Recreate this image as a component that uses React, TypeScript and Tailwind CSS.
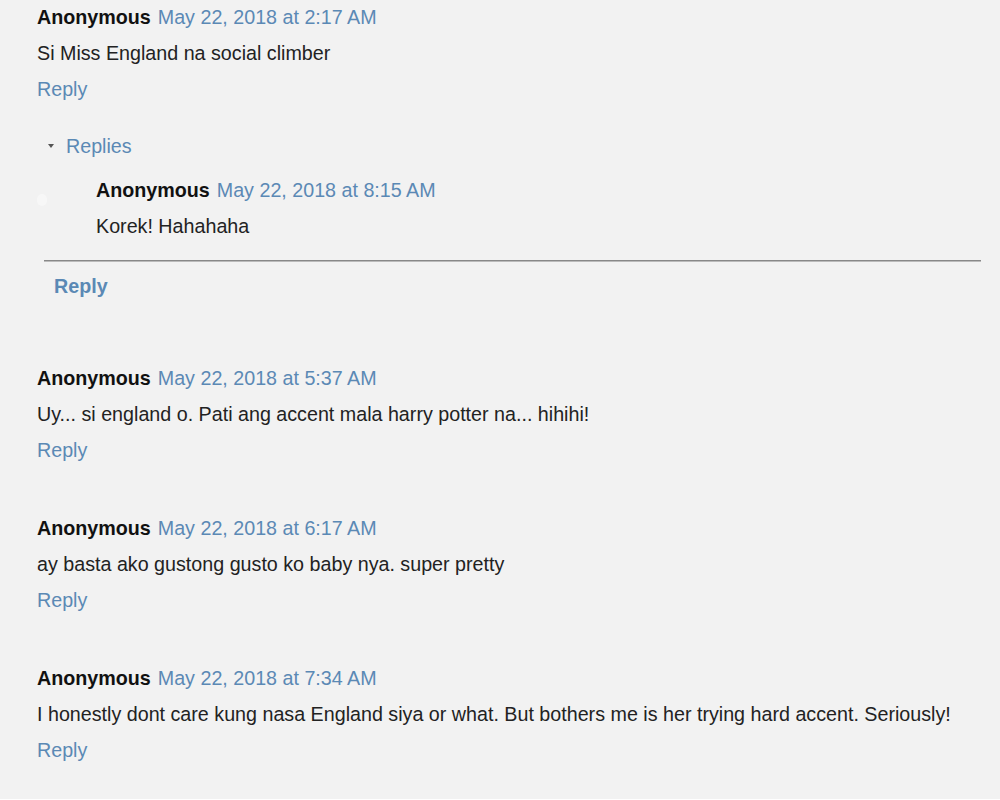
const LINK = 'text-[#5b89b5]';

interface CommentData {
  time: string;
  body: string;
}

const comments: CommentData[] = [
  { time: 'May 22, 2018 at 5:37 AM', body: 'Uy... si england o. Pati ang accent mala harry potter na... hihihi!' },
  { time: 'May 22, 2018 at 6:17 AM', body: 'ay basta ako gustong gusto ko baby nya. super pretty' },
  { time: 'May 22, 2018 at 7:34 AM', body: 'I honestly dont care kung nasa England siya or what. But bothers me is her trying hard accent. Seriously!' },
];

const Byline = ({ time }: { time: string }) => (
  <div className="flex gap-[7px]">
    <span className="font-bold text-[#111]">Anonymous</span>
    <a className={LINK}>{time}</a>
  </div>
);

const Comment = ({ time, body }: CommentData) => (
  <div>
    <Byline time={time} />
    <p>{body}</p>
    <a className={LINK}>Reply</a>
  </div>
);

export default function App() {
  return (
    <div className="min-h-screen bg-[#f2f2f2] pl-[37px] pr-[19px] font-['Liberation_Sans',Arial,sans-serif] text-[19.7px] leading-[36px] text-[#222]">
      <div className="-mt-px">
        <Comment time="May 22, 2018 at 2:17 AM" body="Si Miss England na social climber" />

        {/* replies thread */}
        <div className="mt-[21px]">
          <div className="flex items-center pl-[11px]">
            <span className="mr-[12px] h-0 w-0 border-x-[3.5px] border-t-[4px] border-x-transparent border-t-[#555]" />
            <a className={LINK}>Replies</a>
          </div>
          <div className="relative mt-[8px] pl-[59px]">
            <span className="absolute left-[0px] top-[22px] h-[12px] w-[10px] rounded-full bg-white/40" />
            <Byline time="May 22, 2018 at 8:15 AM" />
            <p>Korek! Hahahaha</p>
          </div>
          <div className="ml-[7px] mt-[16px] h-[2px] border-t border-[#888] bg-[#bbb]" />
          <a className={`ml-[17px] mt-[6px] block w-fit font-bold ${LINK}`}>Reply</a>
        </div>
      </div>

      <div className="mt-[56px] flex flex-col gap-[42px]">
        {comments.map((c) => (
          <Comment key={c.time} {...c} />
        ))}
      </div>
    </div>
  );
}
